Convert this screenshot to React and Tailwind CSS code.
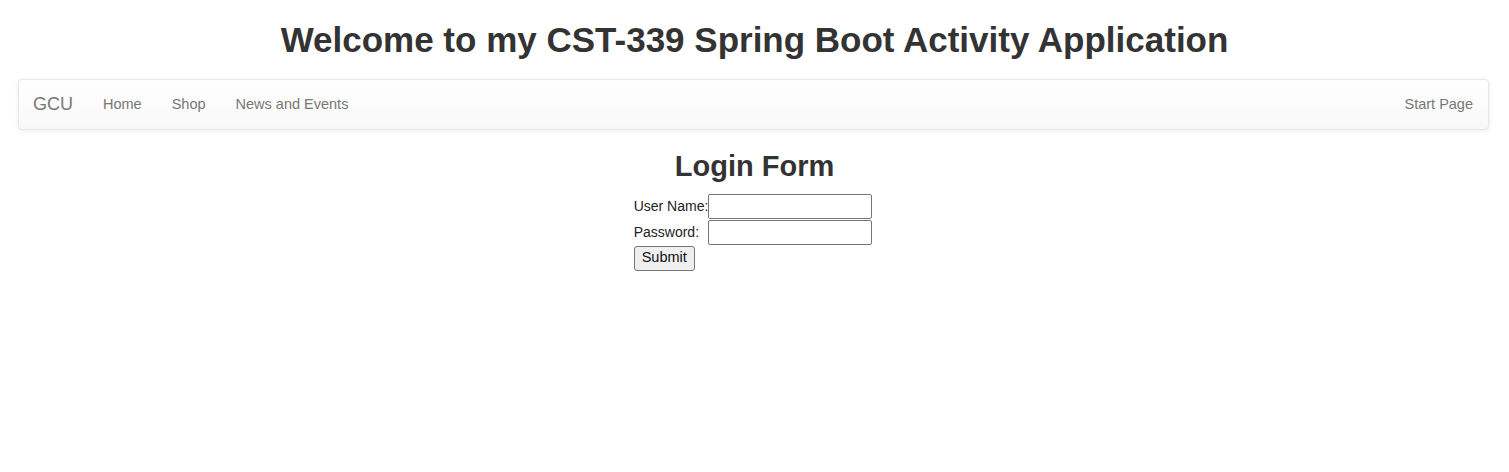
import React from "react";

export default function App() {
  const links = ["Home", "Shop", "News and Events"];

  return (
    <div className="min-h-screen bg-white text-[#333] font-['Liberation_Sans',Arial,sans-serif] text-[14px]">
      <h1 className="text-center text-[35px] leading-[40px] font-bold pt-[20px] pb-[19px]">
        Welcome to my CST-339 Spring Boot Activity Application
      </h1>

      {/* Navbar */}
      <nav className="ml-[18px] mr-[20px] h-[51px] flex items-center justify-between rounded-[4px] border border-[#e7e7e7] bg-gradient-to-b from-white to-[#f8f8f8] shadow-[0_1px_5px_rgba(0,0,0,0.075)] pl-[14px] pr-[15px]">
        <div className="flex items-center">
          <a className="text-[18px] text-[#777] pr-[15px]">GCU</a>
          {links.map((l) => (
            <a key={l} className="px-[15px] text-[#777] text-[14.5px]">
              {l}
            </a>
          ))}
        </div>
        <a className="text-[#777] text-[14.5px]">Start Page</a>
      </nav>

      <div className="flex flex-col items-center">
        <h2 className="text-[29px] leading-[33px] font-bold mt-[20px] mb-[10px] text-[#333]">Login Form</h2>
        <table className="border-collapse text-[14px] text-[#222] -ml-[3px]">
          <tbody>
            <tr>
              <td className="p-0 pr-0 h-[26px]">User Name:</td>
              <td className="p-0">
                <input className="block w-[164px] h-[25px] border border-[#767676] rounded-[2px] bg-white" />
              </td>
            </tr>
            <tr>
              <td className="p-0 h-[26px]">Password:</td>
              <td className="p-0">
                <input type="password" className="block w-[164px] h-[25px] border border-[#767676] rounded-[2px] bg-white" />
              </td>
            </tr>
            <tr>
              <td className="p-0 h-[26px]">
                <button className="h-[25px] px-[7px] border border-[#767676] rounded-[3px] bg-[#efefef] text-[14.5px] text-[#111]">
                  Submit
                </button>
              </td>
              <td />
            </tr>
          </tbody>
        </table>
      </div>
    </div>
  );
}
